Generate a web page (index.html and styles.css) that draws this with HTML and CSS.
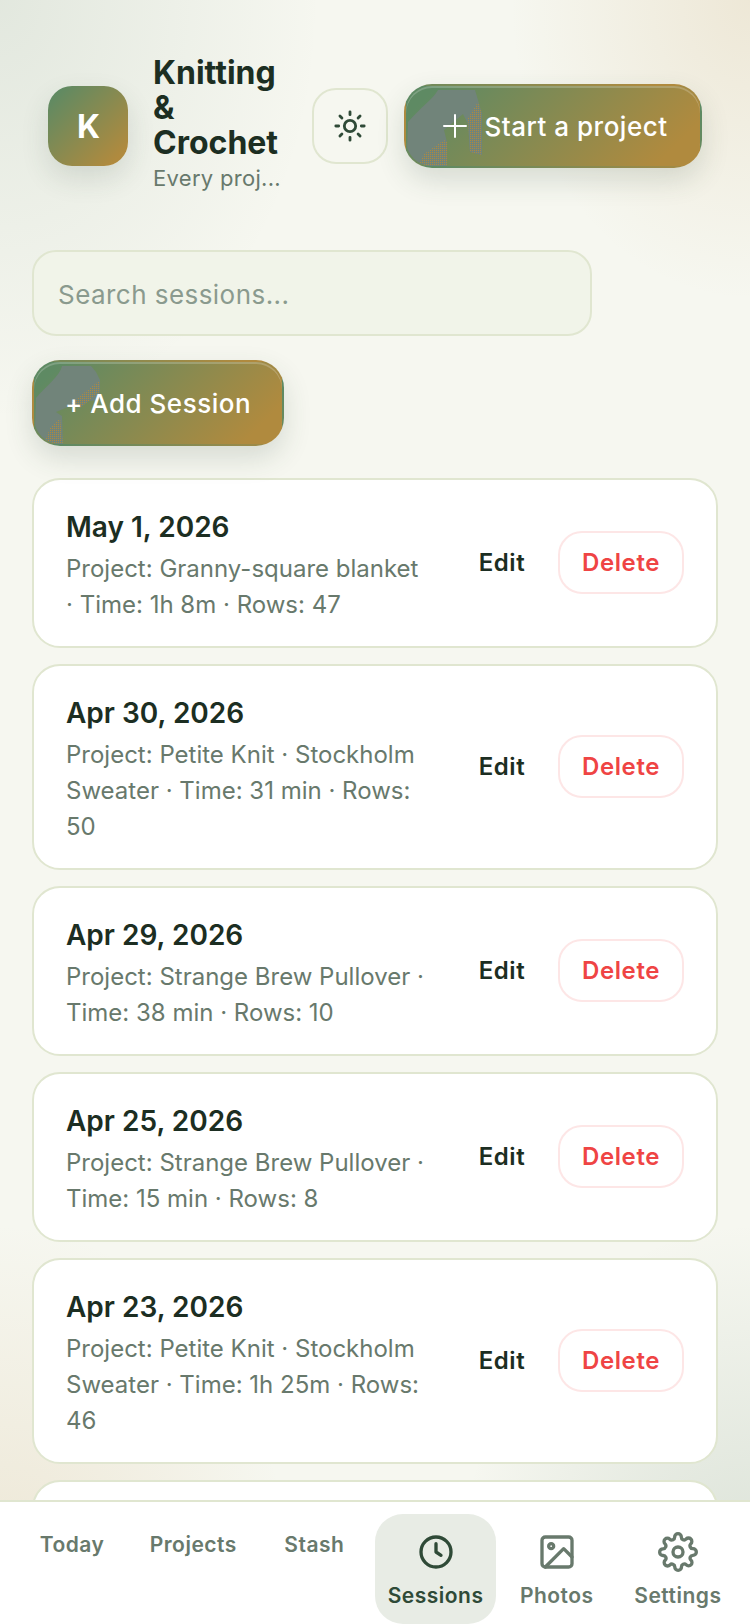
FILE: index.html
```html
<!DOCTYPE html>
<html>

<head>
  <title>Sessions</title>
  <link rel="stylesheet" href="styles.css">
</head>

<body>
  <div class="app">
    <div class="content">
      <div class="header">
        <div class="brand">
          <div class="logo">K</div>
          <div class="brand-text">
            <div class="brand-title">Knitting &amp; Crochet</div>
            <div class="brand-sub">Every proj...</div>
          </div>
        </div>
        <button class="theme-btn">
          <svg width="34" height="34" viewBox="0 0 24 24" fill="none" stroke="#2f4a37" stroke-width="2" stroke-linecap="round">
            <circle cx="12" cy="12" r="4"/>
            <path d="M12 2v2M12 20v2M2 12h2M20 12h2M4.9 4.9l1.4 1.4M17.7 17.7l1.4 1.4M4.9 19.1l1.4-1.4M17.7 6.3l1.4-1.4"/>
          </svg>
        </button>
        <button class="primary-btn start-btn">
          <svg class="blob" width="90" height="80" viewBox="0 0 90 80">
            <defs>
              <pattern id="ditherA" width="2" height="2" patternUnits="userSpaceOnUse">
                <rect width="2" height="2" fill="#71847a"/>
                <rect width="1" height="1" fill="#b08a3e"/>
              </pattern>
            </defs>
            <path d="M32 4C28 12 14 22 2 36L1 64L8 80H41V56L38 44L57 28L62 38L64 66L76 69V28L72 14L69 4Z"/>
            <path fill="url(#ditherA)" d="M62 32L72 16L76 28V69L64 66ZM12 80L18 68L38 54L41 56V80Z"/>
          </svg>
          <svg class="plus" width="26" height="26" viewBox="0 0 26 26" fill="none" stroke="#fff" stroke-width="2" stroke-linecap="round"><path d="M13 2v22M2 13h22"/></svg>
          <span>Start a project</span>
        </button>
      </div>

      <input class="search" type="text" placeholder="Search sessions...">

      <button class="primary-btn add-btn">
        <svg class="blob" width="70" height="82" viewBox="0 0 70 82">
          <defs>
            <pattern id="ditherB" width="2" height="2" patternUnits="userSpaceOnUse">
              <rect width="2" height="2" fill="#71847a"/>
              <rect width="1" height="1" fill="#b08a3e"/>
            </pattern>
          </defs>
          <path d="M28 4C26 14 12 24 2 36L1 64L8 82H29L28 54L22 50L46 40L65 38L66 18L62 10L57 4Z"/>
          <path fill="url(#ditherB)" d="M36 42L66 18V30L46 46ZM10 82L16 66L26 56L29 82Z"/>
        </svg>
        <span>+ Add Session</span>
      </button>

      <div class="sessions">
        <div class="card">
          <div class="card-info">
            <div class="card-date">May 1, 2026</div>
            <div class="card-meta">Project: Granny-square blanket · Time: 1h 8m · Rows: 47</div>
          </div>
          <div class="card-actions">
            <button class="edit-btn">Edit</button>
            <button class="delete-btn">Delete</button>
          </div>
        </div>
        <div class="card">
          <div class="card-info">
            <div class="card-date">Apr 30, 2026</div>
            <div class="card-meta">Project: Petite Knit · Stockholm Sweater · Time: 31 min · Rows: 50</div>
          </div>
          <div class="card-actions">
            <button class="edit-btn">Edit</button>
            <button class="delete-btn">Delete</button>
          </div>
        </div>
        <div class="card">
          <div class="card-info">
            <div class="card-date">Apr 29, 2026</div>
            <div class="card-meta">Project: Strange Brew Pullover · Time: 38 min · Rows: 10</div>
          </div>
          <div class="card-actions">
            <button class="edit-btn">Edit</button>
            <button class="delete-btn">Delete</button>
          </div>
        </div>
        <div class="card">
          <div class="card-info">
            <div class="card-date">Apr 25, 2026</div>
            <div class="card-meta">Project: Strange Brew Pullover · Time: 15 min · Rows: 8</div>
          </div>
          <div class="card-actions">
            <button class="edit-btn">Edit</button>
            <button class="delete-btn">Delete</button>
          </div>
        </div>
        <div class="card">
          <div class="card-info">
            <div class="card-date">Apr 23, 2026</div>
            <div class="card-meta">Project: Petite Knit · Stockholm Sweater · Time: 1h 25m · Rows: 46</div>
          </div>
          <div class="card-actions">
            <button class="edit-btn">Edit</button>
            <button class="delete-btn">Delete</button>
          </div>
        </div>
        <div class="card card-empty"></div>
      </div>
    </div>

    <div class="tabbar">
      <a class="tab">Today</a>
      <a class="tab">Projects</a>
      <a class="tab">Stash</a>
      <a class="tab active">
        <svg width="40" height="40" viewBox="0 0 24 24" fill="none" stroke="currentColor" stroke-width="2" stroke-linecap="round" stroke-linejoin="round"><circle cx="12" cy="12" r="9"/><path d="M12 7v5l3 2"/></svg>
        <span>Sessions</span>
      </a>
      <a class="tab">
        <svg width="40" height="40" viewBox="0 0 24 24" fill="none" stroke="currentColor" stroke-width="2" stroke-linecap="round" stroke-linejoin="round"><rect x="3" y="3" width="18" height="18" rx="2"/><circle cx="8.5" cy="8.5" r="1.5"/><path d="M21 15l-5-5L5 21"/></svg>
        <span>Photos</span>
      </a>
      <a class="tab">
        <svg width="40" height="40" viewBox="0 0 24 24" fill="none" stroke="currentColor" stroke-width="2" stroke-linecap="round" stroke-linejoin="round"><circle cx="12" cy="12" r="3"/><path d="M19.4 15a1.65 1.65 0 0 0 .33 1.82l.06.06a2 2 0 0 1 0 2.83 2 2 0 0 1-2.83 0l-.06-.06a1.65 1.65 0 0 0-1.82-.33 1.65 1.65 0 0 0-1 1.51V21a2 2 0 0 1-2 2 2 2 0 0 1-2-2v-.09A1.65 1.65 0 0 0 9 19.4a1.65 1.65 0 0 0-1.82.33l-.06.06a2 2 0 0 1-2.83 0 2 2 0 0 1 0-2.83l.06-.06a1.65 1.65 0 0 0 .33-1.82 1.65 1.65 0 0 0-1.51-1H3a2 2 0 0 1-2-2 2 2 0 0 1 2-2h.09A1.65 1.65 0 0 0 4.6 9a1.65 1.65 0 0 0-.33-1.82l-.06-.06a2 2 0 0 1 0-2.83 2 2 0 0 1 2.83 0l.06.06a1.65 1.65 0 0 0 1.82.33H9a1.65 1.65 0 0 0 1-1.51V3a2 2 0 0 1 2-2 2 2 0 0 1 2 2v.09a1.65 1.65 0 0 0 1 1.51 1.65 1.65 0 0 0 1.82-.33l.06-.06a2 2 0 0 1 2.83 0 2 2 0 0 1 0 2.83l-.06.06a1.65 1.65 0 0 0-.33 1.82V9a1.65 1.65 0 0 0 1.51 1H21a2 2 0 0 1 2 2 2 2 0 0 1-2 2h-.09a1.65 1.65 0 0 0-1.51 1z"/></svg>
        <span>Settings</span>
      </a>
    </div>
  </div>
</body>

</html>
```

FILE: styles.css
```css
* {
  box-sizing: border-box;
}

html,
body {
  margin: 0;
  padding: 0;
  height: 100%;
}

body {
  font-family: Inter, "Noto Sans", sans-serif;
  color: #1c2e22;
  background-color: #f6f7f0;
}

button {
  font-family: inherit;
  cursor: pointer;
}

.app {
  height: 1624px;
  display: flex;
  flex-direction: column;
  overflow: hidden;
  background:
    radial-gradient(ellipse 320px 420px at 0 0, rgba(94, 130, 104, 0.13), rgba(94, 130, 104, 0) 100%),
    radial-gradient(ellipse 240px 300px at 100% 0, rgba(196, 156, 90, 0.17), rgba(196, 156, 90, 0) 100%),
    radial-gradient(ellipse 300px 400px at 0 100%, rgba(196, 156, 90, 0.2), rgba(196, 156, 90, 0) 100%),
    radial-gradient(ellipse 300px 400px at 100% 100%, rgba(94, 130, 104, 0.2), rgba(94, 130, 104, 0) 100%),
    #f6f7f0;
}

.content {
  flex: 1;
  min-height: 0;
  overflow: hidden;
  padding: 84px 32px 0;
}

.header {
  display: flex;
  align-items: center;
  padding-left: 16px;
  height: 84px;
}

.brand {
  flex: none;
  display: flex;
  align-items: center;
  gap: 25px;
  width: 233px;
}

.logo {
  flex: none;
  width: 80px;
  height: 80px;
  padding-left: 1px;
  border-radius: 24px;
  background: linear-gradient(135deg, #5e8a63 8%, #b08a3e 88%);
  box-shadow: 0 12px 28px rgba(47, 74, 55, 0.14);
  color: #fff;
  font-size: 32px;
  font-weight: 700;
  display: flex;
  align-items: center;
  justify-content: center;
}

.brand-text {
  min-width: 0;
  flex: 1;
  margin-bottom: 4px;
}

.brand-title {
  font-size: 32px;
  line-height: 35px;
  font-weight: 700;
  color: #1c2e22;
}

.brand-sub {
  margin-top: 2px;
  font-size: 22px;
  line-height: 32px;
  letter-spacing: 0.3px;
  color: #68796c;
  white-space: nowrap;
}

.theme-btn {
  flex: none;
  width: 76px;
  height: 76px;
  margin-left: 31px;
  margin-right: 16px;
  border: 2px solid #e0e6d0;
  border-radius: 24px;
  background: #f6f7f0;
  display: flex;
  align-items: center;
  justify-content: center;
  padding: 0;
}

.primary-btn {
  position: relative;
  overflow: hidden;
  border: 2px solid transparent;
  background: linear-gradient(135deg, #5e8a63 8%, #b08a3e 88%);
  color: #fff;
  font-weight: 550;
  letter-spacing: 0.5px;
  box-shadow: inset 0 2px 0 rgba(255, 255, 255, 0.2), 0 12px 28px rgba(47, 74, 55, 0.16);
  display: flex;
  align-items: center;
  justify-content: center;
}

.primary-btn span,
.primary-btn .plus {
  position: relative;
}

.blob {
  position: absolute;
  left: 0;
  top: 0;
  fill: #71847a;
}

.start-btn {
  flex: none;
  width: 298px;
  height: 84px;
  padding: 0 0 0 4px;
  border-radius: 28px;
  font-size: 26px;
  gap: 16px;
}

.search {
  display: block;
  width: 560px;
  height: 86px;
  margin-top: 82px;
  padding: 2px 24px 0;
  border: 2px solid #e0e6d0;
  border-radius: 24px;
  background: #f1f4e9;
  font-family: inherit;
  font-size: 26px;
  letter-spacing: 0.45px;
  color: #1c2e22;
}

.search::placeholder {
  color: #8a9a8e;
  opacity: 1;
}

.add-btn {
  width: 252px;
  height: 86px;
  margin-top: 24px;
  border-radius: 28px;
  font-size: 26px;
}

.sessions {
  margin-top: 32px;
  display: flex;
  flex-direction: column;
  gap: 16px;
}

.card {
  display: flex;
  align-items: center;
  gap: 32px;
  padding: 29px 32px 23px;
  background: #fff;
  border: 2px solid #e0e6d0;
  border-radius: 28px;
}

.card-empty {
  min-height: 170px;
}

.card-info {
  flex: 1;
  min-width: 0;
}

.card-date {
  font-size: 28px;
  line-height: 36px;
  font-weight: 600;
  color: #1c2e22;
}

.card-meta {
  margin-top: 6px;
  font-size: 24px;
  line-height: 36px;
  color: #68796c;
}

.card-actions {
  flex: none;
  display: flex;
  align-items: center;
  gap: 16px;
  margin-bottom: 8px;
}

.edit-btn,
.delete-btn {
  height: 63px;
  border-radius: 24px;
  font-size: 24px;
  font-weight: 600;
  letter-spacing: 0.6px;
  background: transparent;
}

.edit-btn {
  width: 80px;
  border: none;
  padding: 0;
  color: #1c2e22;
}

.delete-btn {
  width: 126px;
  border: 2px solid #fde6e6;
  color: #ef4444;
  padding: 0;
}

.tabbar {
  flex: none;
  height: 124px;
  display: grid;
  grid-template-columns: repeat(6, 1fr);
  gap: 1px;
  align-items: start;
  padding: 12px 12px 0;
  background: #fff;
  border-top: 2px solid #e0e6d0;
}

.tab {
  display: flex;
  flex-direction: column;
  align-items: center;
  gap: 11px;
  padding-top: 18px;
  height: 110px;
  color: #68796c;
  font-size: 21px;
  line-height: 26px;
  font-weight: 600;
  letter-spacing: 0.5px;
  border-radius: 28px;
}

.tab.active {
  color: #2f4a37;
  background: #e8ece5;
}
```
